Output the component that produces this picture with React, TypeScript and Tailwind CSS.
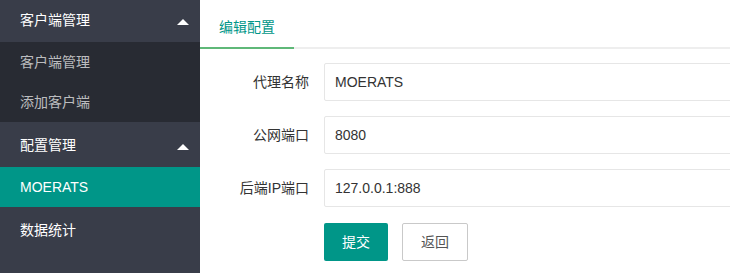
import React from 'react'

const FONT = { fontFamily: '"Liberation Sans", "Noto Sans CJK SC", sans-serif' }

function Arrow() {
  return (
    <span className="absolute right-[11px] top-1/2 mt-[-1px] h-0 w-0 border-x-[6px] border-b-[6px] border-t-0 border-solid border-x-transparent border-b-white" />
  )
}

function Sidebar() {
  return (
    <aside className="w-[200px] shrink-0 bg-[#393D49] text-sm">
      <ul className="mt-[-3px]">
        <li>
          <div className="relative flex h-[45px] items-center pl-5 text-white">
            客户端管理
            <Arrow />
          </div>
          <ul className="bg-[#282B33]">
            <li className="flex h-10 items-center pl-5 text-white/70">客户端管理</li>
            <li className="flex h-10 items-center pl-5 text-white/70">添加客户端</li>
          </ul>
        </li>
        <li>
          <div className="relative flex h-[45px] items-center pl-5 text-white">
            配置管理
            <Arrow />
          </div>
          <ul className="bg-[#282B33]">
            <li className="flex h-10 items-center bg-[#009688] pl-5 text-white">MOERATS</li>
          </ul>
        </li>
        <li>
          <div className="flex h-[45px] items-center pl-5 text-white">数据统计</div>
        </li>
      </ul>
    </aside>
  )
}

const FIELDS = [
  { label: '代理名称', value: 'MOERATS' },
  { label: '公网端口', value: '8080' },
  { label: '后端IP端口', value: '127.0.0.1:888' },
]

function EditForm() {
  return (
    <main className="min-w-0 flex-1 bg-white text-sm text-[#333]">
      <div className="mt-[7px] flex h-[42px] border-b-2 border-[#eeeeee]">
        <div className="mb-[-2px] flex items-center border-b-2 border-[#5FB878] px-[19px] text-[#009688]">
          编辑配置
        </div>
      </div>
      <form className="mt-[14px] flex flex-col gap-[15px]">
        {FIELDS.map((f) => (
          <div key={f.label} className="flex items-center">
            <label className="w-[124px] shrink-0 pr-[15px] text-right">{f.label}</label>
            <input
              readOnly
              value={f.value}
              className="h-[38px] w-[460px] shrink-0 rounded-[2px] border border-[#e6e6e6] bg-white pl-[10px] text-sm text-[#333] outline-none"
              style={FONT}
            />
          </div>
        ))}
        <div className="flex gap-[14px] pl-[124px] pt-px">
          <button type="button" className="h-[38px] rounded-[2px] bg-[#009688] px-[18px] text-sm text-white">
            提交
          </button>
          <button type="button" className="h-[38px] rounded-[2px] border border-[#C9C9C9] bg-white px-[18px] text-sm text-[#555]">
            返回
          </button>
        </div>
      </form>
    </main>
  )
}

export default function App() {
  return (
    <div className="flex h-[273px] w-full overflow-hidden" style={FONT}>
      <Sidebar />
      <EditForm />
    </div>
  )
}
